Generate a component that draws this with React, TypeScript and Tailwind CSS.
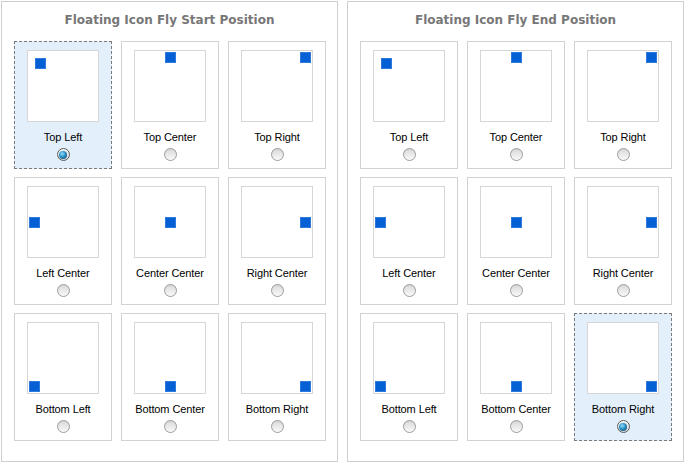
import React from "react";

type Pos = { label: string; box: string };

const POSITIONS: Pos[] = [
  { label: "Top Left", box: "items-start justify-start p-[7px]" },
  { label: "Top Center", box: "items-start justify-center p-[1px]" },
  { label: "Top Right", box: "items-start justify-end p-[1px]" },
  { label: "Left Center", box: "items-center justify-start p-[1px]" },
  { label: "Center Center", box: "items-center justify-center p-[1px]" },
  { label: "Right Center", box: "items-center justify-end p-[1px]" },
  { label: "Bottom Left", box: "items-end justify-start p-[1px]" },
  { label: "Bottom Center", box: "items-end justify-center p-[1px]" },
  { label: "Bottom Right", box: "items-end justify-end p-[1px]" },
];

function Radio({ checked }: { checked: boolean }) {
  if (checked) {
    return (
      <div className="w-[13px] h-[13px] rounded-full border border-[#5e5e5e] bg-[linear-gradient(#f4f4f4,#d8d8d8)] flex items-center justify-center">
        <div className="w-[8px] h-[8px] rounded-full bg-[radial-gradient(circle_at_40%_35%,#8fe0ff_0%,#2a8ec4_45%,#0a3f66_100%)]" />
      </div>
    );
  }
  return (
    <div className="w-[13px] h-[13px] rounded-full border border-[#9c9c9c] bg-[linear-gradient(#d2d2d2,#fdfdfd)] flex items-center justify-center">
      <div className="w-[9px] h-[9px] rounded-full bg-[linear-gradient(#dcdcdc,#f6f6f6)]" />
    </div>
  );
}

function Card({ pos, selected }: { pos: Pos; selected: boolean }) {
  return (
    <div
      className={
        selected
          ? "w-[98px] h-[128px] border border-dashed border-[#7a7a7a] bg-[#e3effa] flex flex-col items-center"
          : "w-[98px] h-[128px] border border-[#d2d2d2] bg-white flex flex-col items-center"
      }
    >
      <div className={"mt-[8px] w-[72px] h-[72px] border border-[#d6d6d6] bg-white flex " + pos.box}>
        <div className="w-[11px] h-[11px] bg-[#0560d5] border border-[#2f78dc]" />
      </div>
      <div className="mt-[8px] h-[14px] leading-[14px] text-[11px] tracking-[-0.1px] text-black font-['Liberation_Sans',Arial,sans-serif]">
        {pos.label}
      </div>
      <div className="mt-[4px]">
        <Radio checked={selected} />
      </div>
    </div>
  );
}

function Panel({ title, selected }: { title: string; selected: string }) {
  return (
    <div className="w-[337px] h-[461px] border border-[#cfcfcf] bg-white flex flex-col">
      <div className="h-[39px] pt-[10px] text-center text-[12px] leading-[16px] font-bold text-[#777777] font-['DejaVu_Sans',Verdana,sans-serif]">
        {title}
      </div>
      <div className="pl-[12px] grid grid-cols-[98px_98px_98px] gap-x-[9px] gap-y-[8px]">
        {POSITIONS.map((p) => (
          <Card key={p.label} pos={p} selected={p.label === selected} />
        ))}
      </div>
    </div>
  );
}

export default function App() {
  return (
    <div className="w-[686px] h-[463px] bg-white pt-[1px] pl-[1px] flex gap-[9px]">
      <Panel title="Floating Icon Fly Start Position" selected="Top Left" />
      <Panel title="Floating Icon Fly End Position" selected="Bottom Right" />
    </div>
  );
}
